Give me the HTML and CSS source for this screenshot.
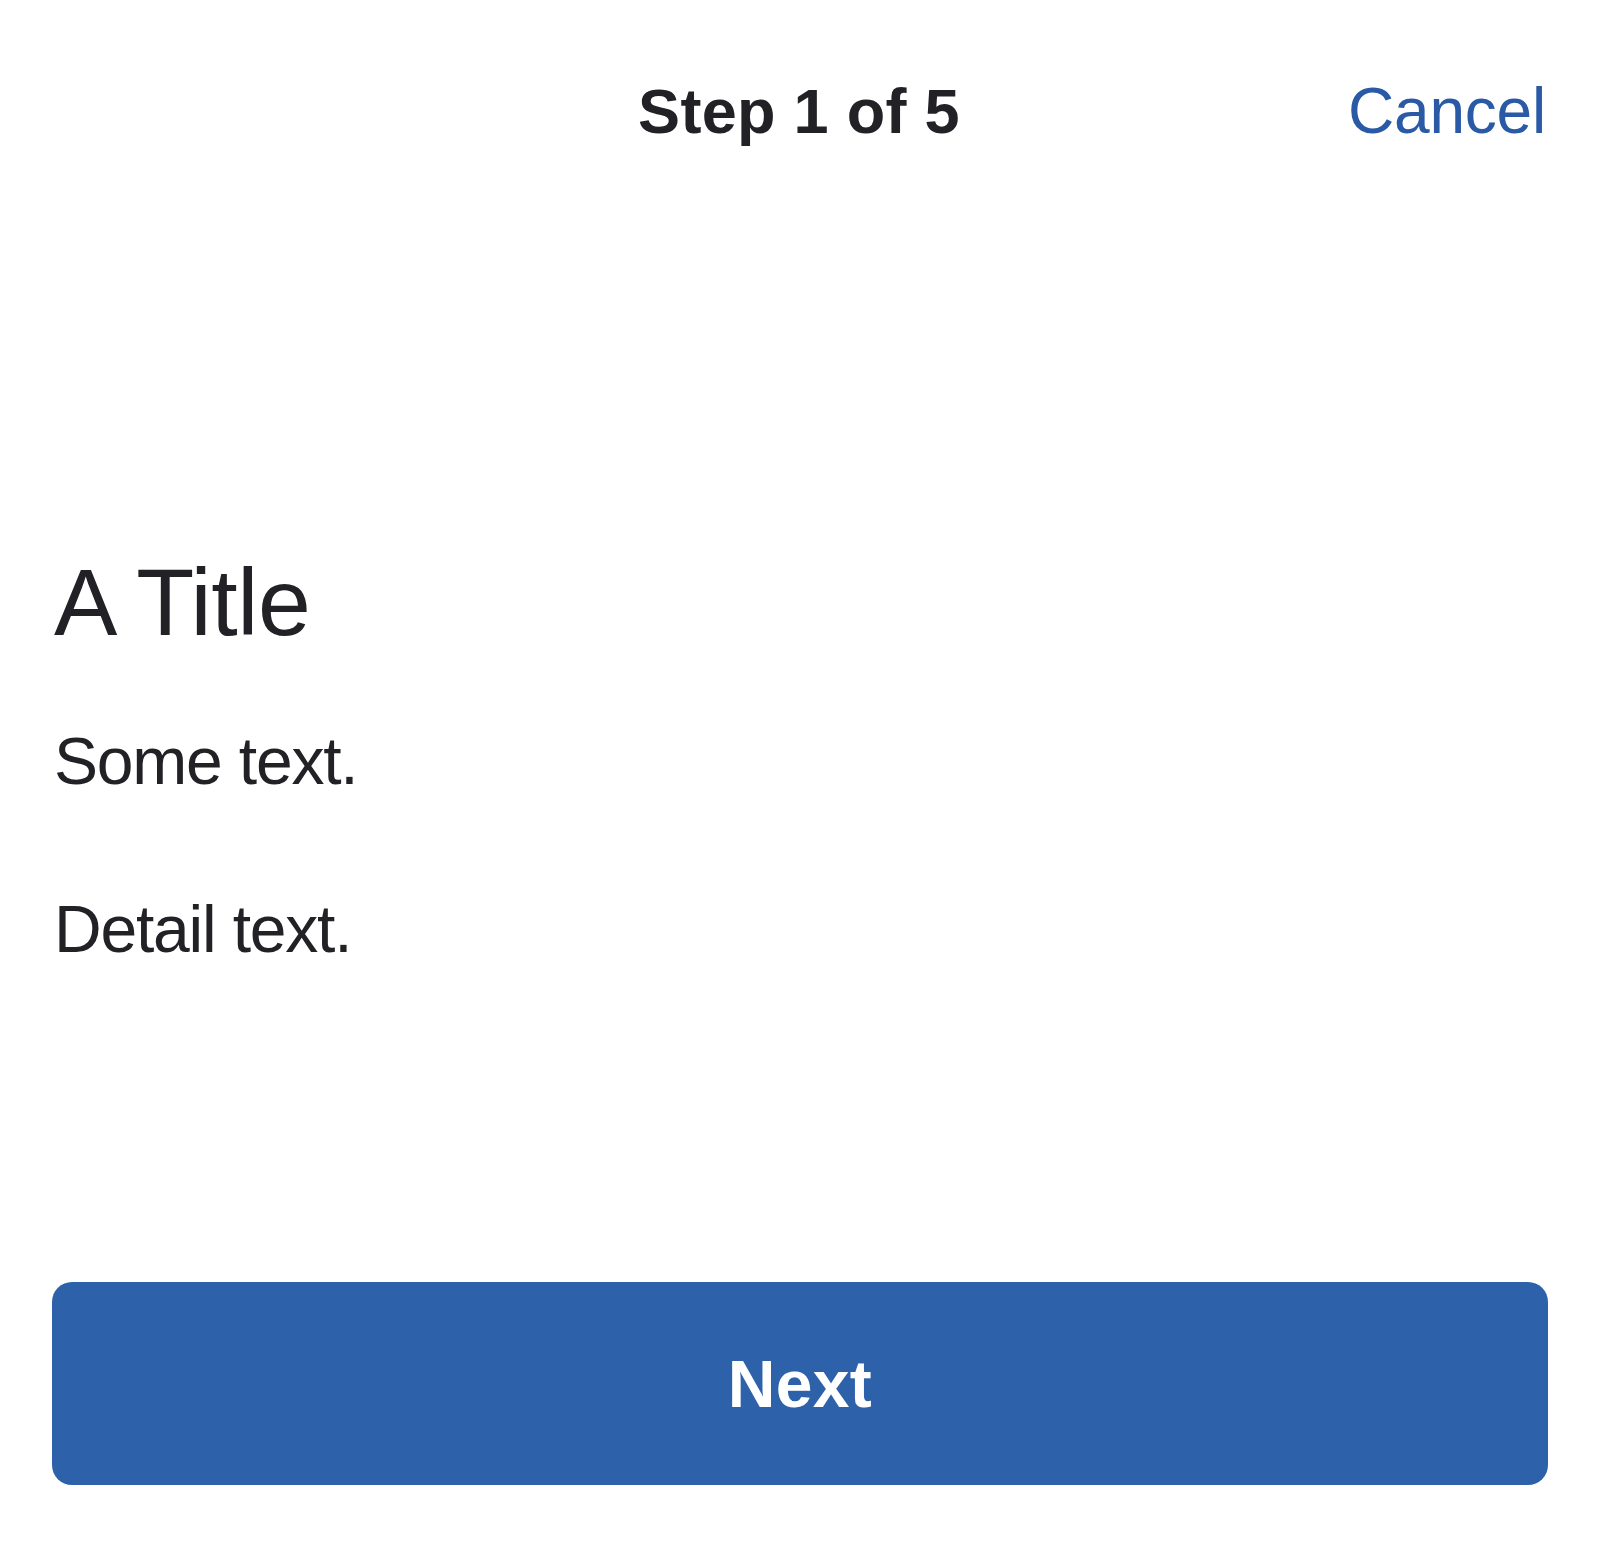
FILE: index.html
```html
<!DOCTYPE html>
<html lang="en">
<head>
<meta charset="utf-8">
<title>Step 1 of 5</title>
<link rel="stylesheet" href="styles.css">
</head>
<body>
<div class="screen">
  <header class="nav">
    <span class="nav-spacer"></span>
    <h1 class="nav-title">Step 1 of 5</h1>
    <a class="nav-cancel" href="#">Cancel</a>
  </header>
  <main class="content">
    <h2 class="title">A Title</h2>
    <p class="text">Some text.</p>
    <p class="text detail">Detail text.</p>
  </main>
  <footer class="actions">
    <button class="btn-primary" type="button">Next</button>
  </footer>
</div>
</body>
</html>
```
FILE: styles.css
```css
* { box-sizing: border-box; }

html, body {
  margin: 0;
  padding: 0;
  background: #ffffff;
}

body {
  font-family: "Liberation Sans", Arial, Helvetica, sans-serif;
  color: #222226;
}

.screen {
  display: flex;
  flex-direction: column;
  height: 1560px;
}

/* top navigation bar */
.nav {
  display: grid;
  grid-template-columns: 1fr auto 1fr;
  align-items: baseline;
  padding: 75px 54px 0 52px;
}

.nav-title {
  margin: 0;
  font-size: 63px;
  line-height: 72px;
  font-weight: 700;
  letter-spacing: 0.3px;
  color: #222226;
}

.nav-cancel {
  justify-self: end;
  font-size: 64px;
  line-height: 72px;
  letter-spacing: -0.2px;
  color: #2a59a6;
  text-decoration: none;
}

/* body copy */
.content {
  padding: 400px 52px 0 54px;
}

.title {
  margin: 0;
  font-size: 95px;
  line-height: 110px;
  font-weight: 400;
  letter-spacing: -0.3px;
}

.text {
  margin: 66px 0 0;
  font-size: 66px;
  line-height: 76px;
  letter-spacing: -1.2px;
}

.text.detail {
  margin-top: 92px;
}

/* bottom action */
.actions {
  margin-top: auto;
  padding: 0 52px 75px;
}

.btn-primary {
  display: flex;
  align-items: center;
  justify-content: center;
  width: 100%;
  height: 203px;
  border: 0;
  border-radius: 20px;
  background: #2d62ab;
  color: #ffffff;
  font-family: "Liberation Sans", Arial, Helvetica, sans-serif;
  font-size: 66px;
  font-weight: 700;
  line-height: 76px;
  letter-spacing: 0.3px;
  padding: 0;
}
```
